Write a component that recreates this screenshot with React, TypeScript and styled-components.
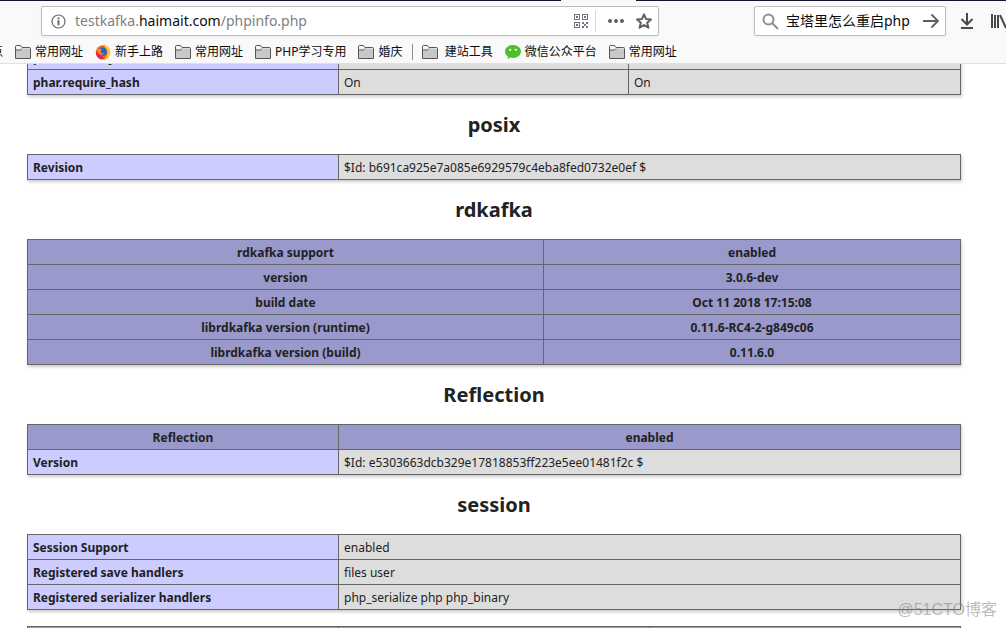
import React from "react";
import styled, { createGlobalStyle } from "styled-components";

const Global = createGlobalStyle`
  * { box-sizing: border-box; }
  body { margin: 0; background: #fff; color: #222; font-family: "Noto Sans", "Noto Sans CJK SC", sans-serif; }
`;

const Browser = styled.div`
  position: relative;
  display: flex;
  flex-direction: column;
  height: 100vh;
  overflow: hidden;
`;

const Chrome = styled.header`
  flex: none;
  background: #f9f9fa;
  border-bottom: 1px solid #e0e0e1;
`;

const TabEdge = styled.div`
  display: flex;
  height: 1px;
`;

const Inactive = styled.span<{ $width?: number }>`
  flex: ${(p) => (p.$width ? `0 0 ${p.$width}px` : "1")};
  background: #14142b;
`;

const ActiveTab = styled.span`
  flex: 0 0 75px;
`;

const NavBar = styled.div`
  display: flex;
  align-items: center;
  padding: 5px 0 3px 41px;
`;

const Field = styled.div<{ $width: number }>`
  display: flex;
  align-items: center;
  flex: 0 0 ${(p) => p.$width}px;
  min-width: 0;
  height: 30px;
  background: #fff;
  border: 1px solid #bebebe;
  border-radius: 2px;
  box-shadow: 0 1px 3px rgba(0, 0, 0, 0.06);
`;

const Address = styled.div`
  flex: 1;
  font-size: 14px;
  line-height: 20px;
  color: #808080;
  b { font-weight: 400; color: #0c0c0d; }
`;

const SearchInput = styled.input`
  flex: 1;
  width: 100%;
  min-width: 0;
  padding: 0;
  border: 0;
  outline: 0;
  background: none;
  font: 14px/20px "Noto Sans", "Noto Sans CJK SC", sans-serif;
  color: #0c0c0d;
`;

const IconButton = styled.button<{ $pad?: number }>`
  display: flex;
  flex: none;
  padding: 0 ${(p) => p.$pad ?? 6}px;
  border: 0;
  background: none;
`;

const Divider = styled.span`
  width: 1px;
  height: 22px;
  margin: 0 6px 0 1px;
  background: #d7d7db;
`;

const Spacer = styled.div`
  flex: 1;
`;

const Tools = styled.div`
  display: flex;
  flex: 0 0 60px;
  gap: 5px;
  padding-left: 8px;
  overflow: hidden;
`;

const Bookmarks = styled.nav`
  display: flex;
  align-items: center;
  height: 24px;
  margin-left: -9px;
  padding-top: 1px;
  gap: 12px;
  overflow: hidden;
`;

const Bookmark = styled.a`
  display: flex;
  align-items: center;
  gap: 4px;
  flex: none;
  font-size: 12px;
  line-height: 18px;
  color: #0c0c0d;
  text-decoration: none;
`;

const BookmarkDivider = styled.span`
  width: 1px;
  height: 16px;
  margin: 0 -3px;
  background: #8c8c8c;
`;

const Viewport = styled.main`
  flex: 1;
  min-height: 0;
  overflow: hidden;
  padding: 0 18px 0 0;
`;

const Scrolled = styled.div`
  margin-top: -20px;
`;

const Heading = styled.h2`
  margin: 17px 0 16px;
  font-size: 20px;
  line-height: 26px;
  text-align: center;
`;

const InfoTable = styled.table`
  width: 934px;
  max-width: 100%;
  margin: 0 auto 16px;
  table-layout: fixed;
  border-collapse: collapse;
  box-shadow: 1px 2px 3px #ccc;
  font-size: 12px;
  line-height: 16px;
`;

const Th = styled.th`
  height: 25px;
  padding: 5px 5px 3px;
  border: 1px solid #666;
  background: #9999cc;
`;

const Name = styled.th`
  height: 25px;
  padding: 5px 5px 3px;
  border: 1px solid #666;
  background: #ccccff;
  text-align: left;
`;

const Value = styled.td`
  height: 25px;
  padding: 5px 5px 3px;
  border: 1px solid #666;
  background: #ddd;
`;

const Watermark = styled.div`
  position: absolute;
  right: 9px;
  bottom: 7px;
  font: 16px/22px "Liberation Sans", "Noto Sans CJK SC", sans-serif;
  color: rgba(120, 120, 120, 0.5);
`;

const Folder = () => (
  <svg width="16" height="14" viewBox="0 0 16 14">
    <path d="M.5 13.5V1.500q0-1 1-1h4l1.500 2h7.500q1 0 1 1v10z" fill="#f4f4f4" stroke="#555" />
    <path d="M1 5h4.500l1.500-1.500H15V13H1z" fill="#c8c8c8" />
    <path d="M.5 5h5L7 3.500" fill="none" stroke="#555" />
  </svg>
);

const Firefox = () => (
  <svg width="16" height="16" viewBox="0 0 16 16">
    <circle cx="8" cy="8.500" r="7.200" fill="#ff5a1f" />
    <path d="M9 .5c4 1.500 6.500 4.500 6.200 8.500-.4 4-3.600 6.500-7 6.700C12 13 13 10 12 7 11.500 5 9.500 3.500 9 .5z" fill="#ffc529" />
    <path d="M1 7c-.5 4 1.500 7.500 5.500 8.600L9 14 3 9z" fill="#e8205a" />
    <circle cx="7.800" cy="7.600" r="4.200" fill="#2363c4" />
    <path d="M1.500 3.500 4 5l3 .2L5.500 7.500l1 1.500 2.500.5C8 11 5.500 11.500 3.500 9.500z" fill="#ff8a1c" />
  </svg>
);

const WeChat = () => (
  <svg width="16" height="16" viewBox="0 0 16 16">
    <path d="M8 1c4.500 0 8 2.900 8 6.500S12.500 14 8 14c-1 0-2-.1-2.800-.4L2.500 15l.4-2.600C1.100 11.200 0 9.500 0 7.500 0 3.900 3.500 1 8 1z" fill="#4fbf2f" />
    <circle cx="5.200" cy="5.800" r="1.100" fill="#fff" />
    <circle cx="10.800" cy="5.800" r="1.100" fill="#fff" />
  </svg>
);

const InfoIcon = () => (
  <svg width="15" height="15" viewBox="0 0 15 15">
    <circle cx="7.500" cy="7.500" r="6.500" fill="none" stroke="#6a6a6a" strokeWidth="1.200" />
    <path d="M6.500 3.500h2v1.700h-2zM6.500 6.300h2v5h-2z" fill="#6a6a6a" />
  </svg>
);

const Qr = () => (
  <svg width="14" height="14" viewBox="0 0 14 14" fill="#6f7683">
    <path fillRule="evenodd" d="M0 0h6v6H0zM1 1v4h4V1zM8 0h6v6H8zM9 1v4h4V1zM0 8h6v6H0zM1 9v4h4V9z" />
    <path d="M2 2h2v2H2zM10 2h2v2h-2zM2 10h2v2H2zM8 8h2v2H8zM12 8h2v2h-2zM10 10h2v2h-2zM8 12h2v2H8zM12 12h2v2h-2z" />
  </svg>
);

const Dots = () => (
  <svg width="16" height="16" viewBox="0 0 16 16" fill="#5f5f60">
    <circle cx="2" cy="8" r="2" /><circle cx="8" cy="8" r="2" /><circle cx="14" cy="8" r="2" />
  </svg>
);

const Star = () => (
  <svg width="16" height="16" viewBox="0 0 16 16">
    <path d="M8 1.300 10 5.900l5 .5-3.800 3.300 1.200 5L8 12.100l-4.400 2.600 1.200-5L1 6.400l5-.5z" fill="none" stroke="#5f5f60" strokeWidth="2" strokeLinejoin="round" />
  </svg>
);

const Magnifier = () => (
  <svg width="17" height="17" viewBox="0 0 17 17" fill="none" stroke="#8f8f90" strokeWidth="2">
    <circle cx="6.500" cy="6.500" r="5" /><path d="m10 10 6 6" />
  </svg>
);

const Go = () => (
  <svg width="16" height="16" viewBox="0 0 16 16" fill="none" stroke="#5f5f60" strokeWidth="1.800">
    <path d="M0 8h14.500M8.500 1.500 15 8l-6.500 6.500" />
  </svg>
);

const Download = () => (
  <svg width="14" height="16" viewBox="0 0 14 16" fill="none" stroke="#4a4a4c" strokeWidth="2">
    <path d="M7 0v11M1.500 6 7 11.500 12.500 6M1 15h12" />
  </svg>
);

const Library = () => (
  <svg width="16" height="16" viewBox="0 0 16 16" fill="none" stroke="#4a4a4c" strokeWidth="2">
    <path d="M1 1v14M4 2v13M7 2v13M9 2l6 13" />
  </svg>
);

type Row = string[];

function ModuleTable({ widths, head = [], rows = [] }: { widths: number[]; head?: Row[]; rows?: Row[] }) {
  return (
    <InfoTable>
      <colgroup>
        {widths.map((w, i) => <col key={i} width={w} />)}
        <col />
      </colgroup>
      <tbody>
        {head.map((r, i) => (
          <tr key={i}>{r.map((c, j) => <Th key={j}>{c}</Th>)}</tr>
        ))}
        {rows.map((r) => (
          <tr key={r[0]}>
            <Name scope="row">{r[0]}</Name>
            {r.slice(1).map((c, j) => <Value key={j}>{c}</Value>)}
          </tr>
        ))}
      </tbody>
    </InfoTable>
  );
}

export default function App() {
  return (
    <Browser>
      <Global />
      <Chrome>
        <TabEdge><Inactive $width={561} /><ActiveTab /><Inactive /></TabEdge>
        <NavBar>
          <Field $width={618}>
            <IconButton $pad={9} aria-label="Site information"><InfoIcon /></IconButton>
            <Address>testkafka.<b>haimait.com</b>/phpinfo.php</Address>
            <IconButton aria-label="QR code"><Qr /></IconButton>
            <Divider />
            <IconButton aria-label="Page actions"><Dots /></IconButton>
            <IconButton aria-label="Bookmark this page"><Star /></IconButton>
          </Field>
          <Spacer />
          <Field $width={192}>
            <IconButton $pad={7} aria-label="Search engine"><Magnifier /></IconButton>
            <SearchInput aria-label="Search" defaultValue="宝塔里怎么重启php" />
            <IconButton aria-label="Go"><Go /></IconButton>
          </Field>
          <Tools>
            <IconButton aria-label="Downloads"><Download /></IconButton>
            <IconButton aria-label="Library"><Library /></IconButton>
          </Tools>
        </NavBar>
        <Bookmarks>
          <Bookmark href="#">点</Bookmark>
          <Bookmark href="#"><Folder />常用网址</Bookmark>
          <Bookmark href="#"><Firefox />新手上路</Bookmark>
          <Bookmark href="#"><Folder />常用网址</Bookmark>
          <Bookmark href="#"><Folder />PHP学习专用</Bookmark>
          <Bookmark href="#"><Folder />婚庆</Bookmark>
          <BookmarkDivider />
          <Bookmark href="#"><Folder />{"\u00a0"}建站工具</Bookmark>
          <Bookmark href="#"><WeChat />微信公众平台</Bookmark>
          <Bookmark href="#"><Folder />常用网址</Bookmark>
        </Bookmarks>
      </Chrome>
      <Viewport>
        <Scrolled>
          <ModuleTable widths={[311, 290]} rows={[["phar.readonly", "On", "On"], ["phar.require_hash", "On", "On"]]} />
          <Heading>posix</Heading>
          <ModuleTable widths={[311]} rows={[["Revision", "$Id: b691ca925e7a085e6929579c4eba8fed0732e0ef $"]]} />
          <Heading>rdkafka</Heading>
          <ModuleTable widths={[516]} head={[
            ["rdkafka support", "enabled"],
            ["version", "3.0.6-dev"],
            ["build date", "Oct 11 2018 17:15:08"],
            ["librdkafka version (runtime)", "0.11.6-RC4-2-g849c06"],
            ["librdkafka version (build)", "0.11.6.0"],
          ]} />
          <Heading>Reflection</Heading>
          <ModuleTable widths={[311]} head={[["Reflection", "enabled"]]} rows={[["Version", "$Id: e5303663dcb329e17818853ff223e5ee01481f2c $"]]} />
          <Heading>session</Heading>
          <ModuleTable widths={[311]} rows={[
            ["Session Support", "enabled"],
            ["Registered save handlers", "files user"],
            ["Registered serializer handlers", "php_serialize php php_binary"],
          ]} />
          <ModuleTable widths={[311, 311]} head={[["Directive", "Local Value", "Master Value"]]} />
        </Scrolled>
      </Viewport>
      <Watermark>@51CTO博客</Watermark>
    </Browser>
  );
}
